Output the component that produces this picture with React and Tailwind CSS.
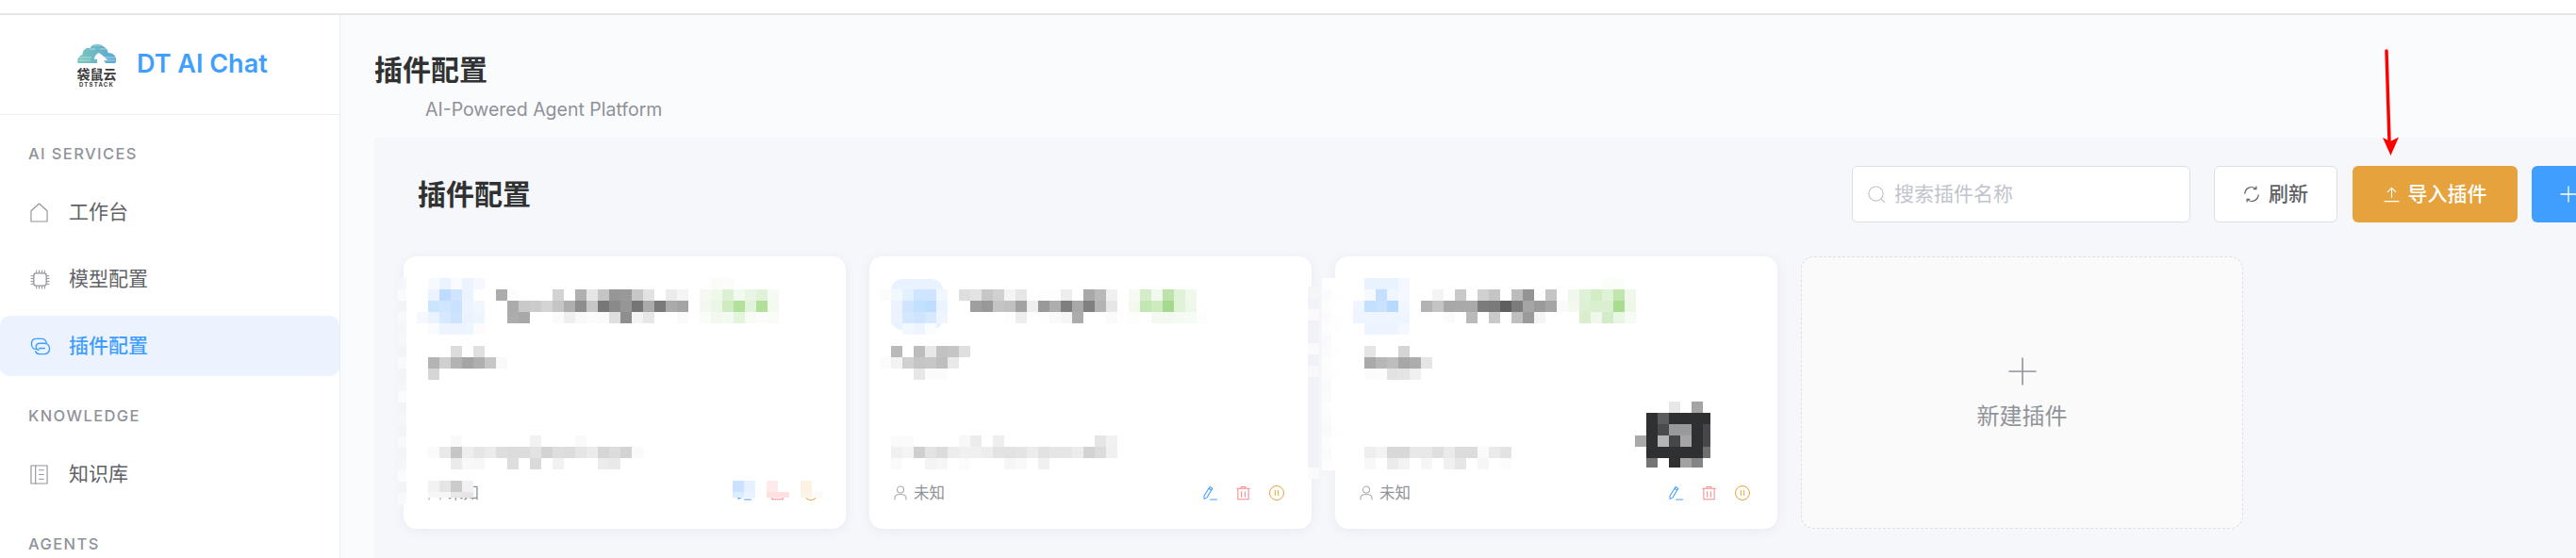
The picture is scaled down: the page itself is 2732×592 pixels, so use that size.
import React from "react";

function parseRow(s) {
  const out = [];
  s.split(" ").filter(Boolean).forEach((t) => {
    if (t[0] === "_") {
      for (let i = 0; i < Number(t.slice(1)); i++) out.push(null);
    } else if (t.length === 2) {
      out.push("#" + t + t + t);
    } else {
      out.push("#" + t);
    }
  });
  return out;
}

function Mosaic({ rows, left = 0, w = 12, h = 12, lastCol = -1, lastW = 8 }) {
  return (
    <div className="flex flex-col shrink-0" style={{ marginLeft: left }}>
      {rows.map((r, i) => (
        <div key={i} className="flex" style={{ height: h }}>
          {parseRow(r).map((c, j) => (
            <div key={j} style={{ width: j === lastCol ? lastW : w, height: h, background: c || "transparent" }} />
          ))}
        </div>
      ))}
    </div>
  );
}

const I = { fill: "none", stroke: "currentColor", strokeLinecap: "round", strokeLinejoin: "round" };

const HomeIcon = () => (
  <svg viewBox="0 0 20 22" className="w-[19px] h-[21px]" {...I} strokeWidth="1.2">
    <path d="M1 9.2 10 1l9 8.2V21H1z" />
  </svg>
);
const ChipIcon = () => (
  <svg viewBox="0 0 22 22" className="w-[21px] h-[21px]" {...I} strokeWidth="1.1">
    <rect x="4" y="4" width="14" height="14" rx="2.5" strokeWidth="1.4" />
    <path d="M7 1v2M10 1v2M13 1v2M16 1v2M7 19v2M10 19v2M13 19v2M16 19v2M1 7h2M1 10h2M1 13h2M1 16h2M19 7h2M19 10h2M19 13h2M19 16h2" />
  </svg>
);
const LinkIcon = () => (
  <svg viewBox="0 0 22 22" className="w-[22px] h-[21px]" {...I} strokeWidth="1.5">
    <path d="M6 14H5.500C3 14 1 11.500 1 8c0-3.500 2-5.500 5-5.500h6c3 0 5 1.800 5.500 4.500" />
    <path d="M9 15c-1.500 0-3-1.500-3-3.500C6 9 8 7.500 10.500 7.500H15c3.500 0 6 2.500 6 6 0 3.500-2.500 6-5.500 6H10c-2.500 0-4-1.200-4.500-3" />
    <path d="M9.500 13h6" />
  </svg>
);
const BookIcon = () => (
  <svg viewBox="0 0 20 22" className="w-[19px] h-[21px]" {...I} strokeWidth="1.2">
    <rect x="1" y="1" width="18" height="20" />
    <path d="M6 1v20M10 6h5M10 11h5M10 16h5" />
  </svg>
);
const SearchIcon = () => (
  <svg viewBox="0 0 20 20" className="w-[19px] h-[19px]" {...I} strokeWidth="1.2">
    <circle cx="9" cy="9" r="8" />
    <path d="m15 15 3.500 3.500" />
  </svg>
);
const RefreshIcon = () => (
  <svg viewBox="0 0 20 20" className="w-[18px] h-[18px]" {...I} strokeWidth="1.3">
    <path d="M2 9a8 8 0 0 1 13-5.500" />
    <path d="M18 11a8 8 0 0 1-13 5.500" />
    <path d="M15.500 1v3h-3M4.500 19v-3h3" />
  </svg>
);
const UploadIcon = () => (
  <svg viewBox="0 0 18 18" className="w-[17px] h-[17px]" {...I} strokeWidth="1.2">
    <path d="M9 12V1.500M4.500 6 9 1.500 13.500 6M1 16.500h16" />
  </svg>
);
const UserIcon = () => (
  <svg viewBox="0 0 14 16" className="w-[14px] h-[16px]" {...I} strokeWidth="1.1">
    <circle cx="7" cy="4.500" r="3.500" />
    <path d="M1 15v-2c0-2 2-3.500 6-3.500s6 1.500 6 3.500v2" />
  </svg>
);
const EditIcon = () => (
  <svg viewBox="0 0 16 16" className="w-[15px] h-[16px]" {...I} strokeWidth="1.1">
    <path d="M1 11.500 7.500 1l3 1.800L4 13.500l-2.800 1.300z" />
    <path d="M6.300 3 9.300 4.800M8 15.500h7.500" />
  </svg>
);
const TrashIcon = () => (
  <svg viewBox="0 0 16 16" className="w-[15px] h-[16px]" {...I} strokeWidth="1.1">
    <path d="M.8 3h14.400M5.500 3V1h5v2M2 3v12.300h12V3M6 6.500v6M10 6.500v6" />
  </svg>
);
const PauseIcon = () => (
  <svg viewBox="0 0 16 16" className="w-[16px] h-[16px]" {...I} strokeWidth="1">
    <circle cx="8" cy="8" r="7.500" />
    <path d="M6.300 5.500v5M9.700 5.500v5" />
  </svg>
);

function Logo() {
  return (
    <div className="flex flex-col items-center w-[41px] h-[47px] overflow-hidden shrink-0">
      <svg viewBox="0 0 41 26" className="w-[41px] h-[26px] shrink-0">
        <defs>
          <linearGradient id="lg" x1="0" x2="1" y1="0" y2="0">
            <stop offset="0" stopColor="#7cc6bb" />
            <stop offset="1" stopColor="#5aa7d4" />
          </linearGradient>
        </defs>
        <path
          d="M.5 22c-1-4 1-8 5-9 0-5 4-8 8-7 2-5 11-6 15-1 3 1 4 4 4 6 5 0 8.500 3 8.500 7 0 2 0 3-1 4H30l-2-3h4c-2-3-6-6-9-8-3 1-5 4-5 7h3v4H2z"
          fill="url(#lg)"
        />
        <path d="M1 16h14M2 19h12M27 16h13M28 19h12M17 3h12M13 7h6M24 7h8" stroke="#ffffff" strokeWidth="0.7" opacity="0.7" />
      </svg>
      <span className="text-[14px] leading-[15px] font-bold text-[#3a3a3a] whitespace-nowrap">袋鼠云</span>
      <span className="mt-[1px] text-[6px] leading-[5px] font-bold text-[#3a3a3a] tracking-[1.2px] whitespace-nowrap">DTSTACK</span>
    </div>
  );
}

function NavItem({ icon, label, active }) {
  return (
    <div
      className={
        "flex items-center h-[64px] mb-[7px] rounded-[10px] text-[21px] " +
        (active ? "bg-[#ecf3fe] text-[#409eff] font-medium" : "text-[#606266]")
      }
    >
      <span className={"w-[73px] pl-[32px] flex items-center " + (active ? "text-[#409eff]" : "text-[#909399]")}>{icon}</span>
      <span>{label}</span>
    </div>
  );
}

function Section({ title, children }) {
  return (
    <div className="pt-[23px]">
      <div className="h-[24px] mb-[18px] pl-[30px] text-[16.5px] leading-[24px] font-medium tracking-[1.4px] text-[#909399]">{title}</div>
      {children}
    </div>
  );
}

function Footer() {
  return (
    <div className="mt-auto mb-[26px] h-[24px] px-[26px] flex items-center justify-between">
      <div className="flex items-center gap-[7px] text-[16.5px] text-[#909399]">
        <span className="text-[#a8abb2] flex"><UserIcon /></span>
        <span>未知</span>
      </div>
      <div className="flex items-center gap-[20px] pr-[3px]">
        <span className="text-[#409eff] flex"><EditIcon /></span>
        <span className="text-[#f78989] flex"><TrashIcon /></span>
        <span className="text-[#e6a23c] flex"><PauseIcon /></span>
      </div>
    </div>
  );
}

function Card({ head, headLeft, desc, descLeft, url, urlLeft, children, icon }) {
  return (
    <div className="relative w-[469px] h-[289px] bg-white rounded-[14px] shadow-[0_2px_12px_rgba(100,110,150,0.09)] flex flex-col pt-[23px]">
      {icon && <div className="absolute left-[23px] top-[24px] w-[55px] h-[54px] rounded-[12px] bg-[#e9f3ff]" />}
      <div className="relative">
        <Mosaic rows={head} left={headLeft} />
      </div>
      <div className="mt-[12px]">
        <Mosaic rows={desc} left={descLeft} />
      </div>
      <div className="mt-[59px]">
        <Mosaic rows={url} left={urlLeft} />
      </div>
      <Footer />
      {children}
    </div>
  );
}

function Overlay({ className, children }) {
  return <div className={"absolute " + className}>{children}</div>;
}

const edgeA = ["f5f6f9", "fafbfd", "f3f4f7", "f8f9fb", "f5f6f9", "f6f7fa", "f3f4f7", "f9fafc", "f3f4f7", "f5f6f9", "fafbfd", "f3f4f7", "f6f7fa", "f3f4f7", "f8f9fb", "f3f4f7", "f5f6f9", "fafbfd", "f3f4f7", "f8f9fb"];
const edgeB = ["f5f6f8", "f2f3f7", "fafafc", "f1f2f7", "f1f2f7", "fafafc", "f1f2f7", "f8f8fb", "f1f2f7", "f1f2f7", "f1f2f7", "f1f2f7", "f1f2f7", "f1f2f7", "f1f2f7", "f1f2f7", "fbfbfd"];
const edgeC = ["fefefe ff", "fbfbfd fefefe", "fdfdfe ff", "fbfbfd fefefe", "fdfdfe fefefe", "fafafc ff", "fbfbfd fefefe", "fdfdfe ff", "fcfcfd fefefe", "fafafc ff", "fbfbfd ff", "fdfdfe ff", "fbfbfd ff", "fafafc fefefe", "fdfdfe ff", "fbfbfd ff", "fdfdfe ff"];

const C1 = {
  head: [
    "_1 f6faff eaf3ff f9fbff ecf3ff f5f8ff _20 fafcf8 fcfcfa",
    "_1 eaf3ff bddcff cfe5ff ebf3ff _2 ac fd _3 d3 _1 b0 e6 c5 97 99 c7 e2 _1 eb f4 _1 f5f9f2 f0f8ec dcf0d3 f2f9ef e9f5e4 e0f2d8 f5fbf3",
    "_1 cde4ff d0e5ff c9e2ff edf4ff f0f7ff _2 ab c9 cb d4 c5 ae 8e c6 77 8a 96 75 aa 7a aa a4 _1 f2f8ef ebf6e6 d0ebc4 b3e09a e2f3db b2e09b f3faf0",
    "f5f9ff eaf3ff d6e9ff cde4ff ecf3ff edf5ff _2 ac a8 _2 fb ef f9 fc fa df 8e f3 e7 _2 fa _1 fafcf8 f1f8ee f3faf1 e4f5dd f6fbf4 fcfdfb f8fcf6",
    "_1 fafbff edf4ff edf4ff eff5ff fdfcfd",
  ],
  desc: ["_2 dc _1 e0", "b4 cf b3 a5 af c6 f9", "d6"],
  url: [
    "_2 f9 _6 f1 _3 f9",
    "fa e9 c6 ee e6 eb de dc dc e2 d3 de dc e5 eb d6 dc d3 fa",
    "_2 eb f8 f7 _2 de _1 da _1 f1 _3 ec e9",
  ],
};

const C2 = {
  head: [
    "_1",
    "fc f2f8ff e3f0ff cfe5ff cfe5ff f0f7ff _1 de e3 c7 d1 f4 e6 _1 fd fd ed _1 a9 b9 f0 _1 f6faf3 d4ecc8 f1f8ee bde3ab e0f2d8 eff8eb",
    "_1 eaf3ff cfe5ff c4e0ff bfddff eaf3ff _2 9f 98 c4 c0 a2 ee 99 ae 7e a8 80 b3 e6 _1 f3f9ef c3e6b2 cdebbe a5d98d e0f2d8 eef8ea",
    "_1 eaf3ff d3e7ff cfe5ff d8e9ff eef5ff _5 fe ee _1 fe fa f6 ac _2 fa _1 fdfdfb _1 f4faf1 f3f9f0 f5faf3 f7fbf5 fdfefc",
    "_2 f3f8ff eef5ff fafcff",
  ],
  desc: ["_1 b9 _1 bd e8 c2 c5 df", "fc f3 d0 c5 c7 be e9", "_3 e7 fb fb"],
  url: [
    "fa fa _4 f8 ec _1 ee _8 e5 f1",
    "f0 f4 cf e3 dc ec f0 f0 ed e3 e2 e4 ec e2 e6 e6 ec d3 dc f0",
    "fa _2 f4 f6 _1 fb _3 f6 f9 _1 f0",
  ],
};

const C3 = {
  head: [
    "_1 e9f2ff e9f2ff e9f2ff f5f9ff _17 fafdf8 fafdf8",
    "_1 f6f9ff c5e0ff eff6ff f5f9ff _2 f4 _1 c9 _1 d0 c5 _1 bc 94 _1 c5 _1 f0f8ec dff1d6 d2ecc6 dff1d6 c0e5ae eff8eb",
    "f0f6ff c5e0ff c9e2ff b8d9ff f2f7ff _1 b3 c4 a8 a9 aa 7c 7a 5f 7c a5 9b a5 fa f3f9ef dcf0d3 daefd0 daefd0 a8dc8e ecf7e7",
    "eef5ff eef5ff eef5ff eef5ff eef5ff _3 fb _1 ba _1 c9 _1 bf 9a f5 _3 d8eecd eff8ea d3ecc7 eaf6e4 f6fbf3",
    "_1 edf4ff edf4ff edf4ff f4f8ff",
  ],
  desc: ["e5 _2 d5", "a9 b7 bd a7 ad e5", "fb fc e2 e4 f0"],
  url: ["_1", "ee f3 d8 d8 e8 e8 df ea dc dc fa ea e3", "f8 _1 eb f3 _1 f6 _1 f0 e6 _1 f6 _1 fc"],
};

const DARK = [
  "_3 e7 _1 a5",
  "_1 2f3032 5b5c5e 2f3032 2f3032 2f3032 2f3032",
  "_1 2f3032 4a4b4d 9a 9a 2f3032 45474a",
  "a9 2f3032 b5 46474a a5 2f3032 45474a",
  "_1 2f3032 2f3032 2f3032 2f3032 2f3032 6f7072",
  "_1 74 ff 2f3032 a2 85",
];

export default function App() {
  return (
    <div className="relative w-[2732px] h-[592px] overflow-hidden bg-white font-['Inter','Noto_Sans_CJK_SC',sans-serif]">
      <div className="h-[16px] bg-white border-b-2 border-[#e6e6e6]" />
      <div className="flex h-[576px]">
        <aside className="w-[361px] shrink-0 bg-white border-r border-[#ebeef5]">
          <div className="h-[106px] border-b border-[#ebeef5] flex items-center pl-[82px] gap-[22px]">
            <Logo />
            <span className="text-[27px] font-semibold text-[#409eff] whitespace-nowrap">DT AI Chat</span>
          </div>
          <div className="pt-[6px]">
            <Section title="AI SERVICES">
              <NavItem icon={<HomeIcon />} label="工作台" />
              <NavItem icon={<ChipIcon />} label="模型配置" />
              <NavItem icon={<LinkIcon />} label="插件配置" active />
            </Section>
            <Section title="KNOWLEDGE">
              <NavItem icon={<BookIcon />} label="知识库" />
            </Section>
            <Section title="AGENTS" />
          </div>
        </aside>
        <main className="flex-1 min-w-0 bg-[#fafbfc] flex flex-col">
          <header className="h-[130px] shrink-0 pl-[36px]">
            <h1 className="mt-[37px] h-[42px] text-[30px] leading-[42px] font-bold text-[#303133]">插件配置</h1>
            <p className="mt-[8px] pl-[54px] text-[19.5px] leading-[26px] text-[#8f9199]">AI-Powered Agent Platform</p>
          </header>
          <section className="flex-1 ml-[36px] bg-[#f6f7fb] pt-[30px] pl-[31px]">
            <div className="flex items-center h-[60px] pl-[15px]">
              <h2 className="w-[1521px] shrink-0 text-[30px] font-bold text-[#303133]">插件配置</h2>
              <div className="w-[359px] shrink-0 h-[60px] rounded-[6px] bg-white border border-[#dcdfe6] flex items-center pl-[16px] gap-[9px] text-[21px] text-[#c0c4cc]">
                <SearchIcon />
                <span>搜索插件名称</span>
              </div>
              <button className="ml-[25px] w-[131px] shrink-0 h-[60px] rounded-[6px] bg-white border border-[#dcdfe6] flex items-center justify-center gap-[9px] text-[21px] font-medium text-[#606266]">
                <RefreshIcon />
                <span>刷新</span>
              </button>
              <button className="ml-[16px] w-[175px] shrink-0 h-[60px] rounded-[6px] bg-[#e6a23c] flex items-center justify-center gap-[9px] text-[21px] font-medium text-white">
                <UploadIcon />
                <span>导入插件</span>
              </button>
              <button className="ml-[15px] w-[175px] shrink-0 h-[60px] rounded-[6px] bg-[#409eff] flex items-center pl-[30px] text-white">
                <svg viewBox="0 0 18 18" className="w-[18px] h-[18px]" {...I} strokeWidth="1.300">
                  <path d="M9 1v16M1 9h16" />
                </svg>
              </button>
            </div>
            <div className="mt-[36px] flex gap-[25px]">
              <Card {...C1} headLeft={14} descLeft={26} urlLeft={26}>
                <Overlay className="left-[26px] top-[238px] h-[18px] overflow-hidden">
                  <Mosaic rows={["f2 e5 cb f1", "f7 f7 e8 e5"]} />
                </Overlay>
                <Overlay className="left-[349px] top-[238px] h-[18px] overflow-hidden">
                  <Mosaic rows={["cbe2ff e6f1ff _1 fdeaea ff _1 fdf1e3 ff", "ddecff eaf3ff _1 fee0e0 fee0e0 _1 fdf4e9 fdfaf5"]} />
                </Overlay>
                <Overlay className="-left-[6px] top-[23px]">
                  <Mosaic rows={edgeA} w={9} />
                </Overlay>
              </Card>
              <Card {...C2} headLeft={11} descLeft={11} urlLeft={23} icon>
                <Overlay className="left-[465px] top-[32px]">
                  <Mosaic rows={edgeB} />
                </Overlay>
              </Card>
              <Card {...C3} headLeft={19} descLeft={31} urlLeft={31}>
                <Overlay className="left-[318px] top-[154px] h-[70px] overflow-hidden">
                  <Mosaic rows={DARK} lastCol={6} />
                </Overlay>
                <Overlay className="-left-[14px] top-[23px]">
                  <Mosaic rows={edgeC} w={10} />
                </Overlay>
              </Card>
              <div className="w-[469px] h-[289px] rounded-[14px] bg-[#fafafa] border border-dashed border-[#dcdfe6] flex flex-col items-center pt-[106px] text-[#909399]">
                <svg viewBox="0 0 30 30" className="w-[30px] h-[30px]" {...I} strokeWidth="1.600">
                  <path d="M15 1v28M1 15h28" />
                </svg>
                <span className="mt-[16px] text-[24px] leading-[34px]">新建插件</span>
              </div>
            </div>
          </section>
        </main>
      </div>
      <Overlay className="left-0 top-0 pointer-events-none">
        <svg width="2732" height="592" className="block">
          <path d="M2531 54 2534 150" stroke="#ff0000" strokeWidth="3.500" strokeLinecap="round" />
          <path d="M2527 146 2535.500 165 2544 145.500 2535 150z" fill="#ff0000" />
        </svg>
      </Overlay>
    </div>
  );
}
